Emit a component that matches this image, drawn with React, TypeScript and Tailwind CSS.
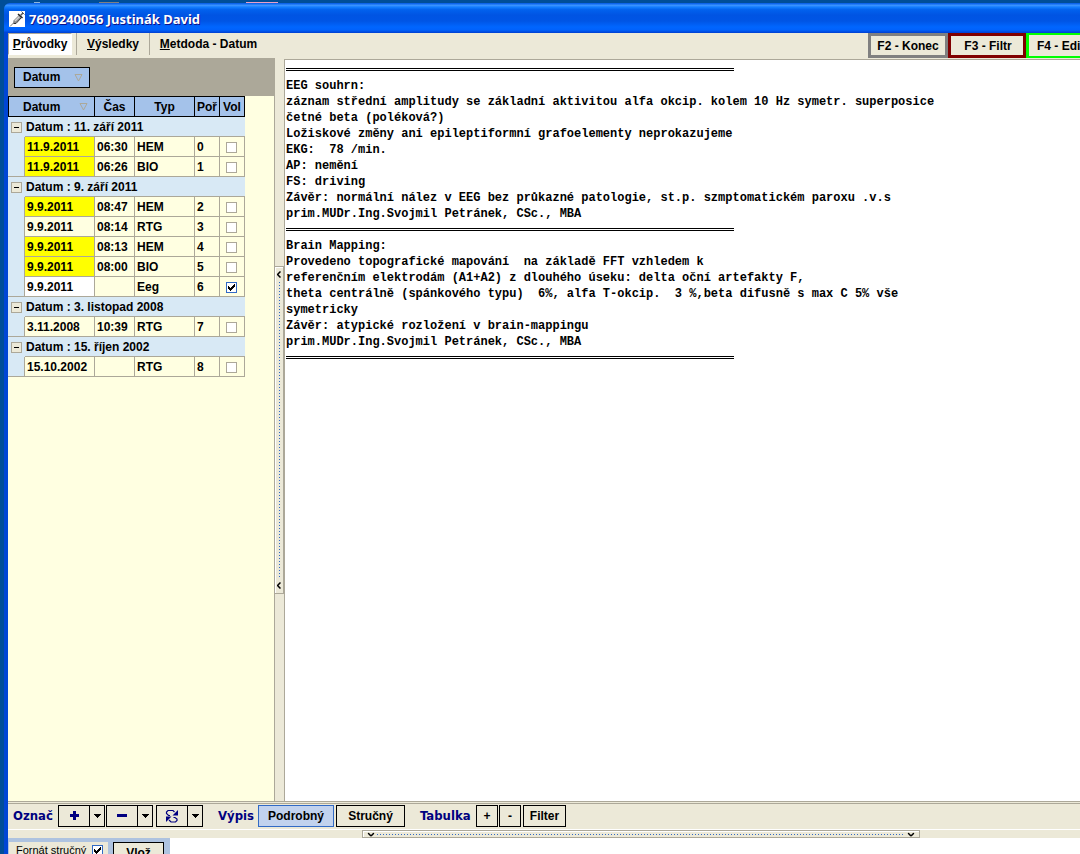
import React, { useState } from "react";
import clsx from "clsx";

interface Exam {
  id: number;
  date: string;
  time: string;
  type: string;
  tone?: "yellow" | "white";
}

interface ExamGroup {
  label: string;
  exams: Exam[];
}

const groups: ExamGroup[] = [
  {
    label: "Datum : 11. září 2011",
    exams: [
      { id: 0, date: "11.9.2011", time: "06:30", type: "HEM", tone: "yellow" },
      { id: 1, date: "11.9.2011", time: "06:26", type: "BIO", tone: "yellow" },
    ],
  },
  {
    label: "Datum : 9. září 2011",
    exams: [
      { id: 2, date: "9.9.2011", time: "08:47", type: "HEM", tone: "yellow" },
      { id: 3, date: "9.9.2011", time: "08:14", type: "RTG" },
      { id: 4, date: "9.9.2011", time: "08:13", type: "HEM", tone: "yellow" },
      { id: 5, date: "9.9.2011", time: "08:00", type: "BIO", tone: "yellow" },
      { id: 6, date: "9.9.2011", time: "", type: "Eeg", tone: "white" },
    ],
  },
  {
    label: "Datum : 3. listopad 2008",
    exams: [{ id: 7, date: "3.11.2008", time: "10:39", type: "RTG" }],
  },
  {
    label: "Datum : 15. říjen 2002",
    exams: [{ id: 8, date: "15.10.2002", time: "", type: "RTG" }],
  },
];

const reportSections = [
  `EEG souhrn:
záznam střední amplitudy se základní aktivitou alfa okcip. kolem 10 Hz symetr. superposice
četné beta (poléková?)
Ložiskové změny ani epileptiformní grafoelementy neprokazujeme
EKG:  78 /min.
AP: nemění
FS: driving
Závěr: normální nález v EEG bez průkazné patologie, st.p. szmptomatickém paroxu .v.s
prim.MUDr.Ing.Svojmil Petránek, CSc., MBA`,
  `Brain Mapping:
Provedeno topografické mapování  na základě FFT vzhledem k
referenčním elektrodám (A1+A2) z dlouhého úseku: delta oční artefakty F,
theta centrálně (spánkového typu)  6%, alfa T-okcip.  3 %,beta difusně s max C 5% vše
symetricky
Závěr: atypické rozložení v brain-mappingu
prim.MUDr.Ing.Svojmil Petránek, CSc., MBA`,
];

const buttonBase = "flex h-[22px] shrink-0 items-center justify-center border border-black bg-[#ece9d8] font-bold";
const checkboxBase = "peer col-start-1 row-start-1 size-[11px] appearance-none border border-[#aca899] bg-white checked:border-[#316ac5]";

function CheckBox(props: React.ComponentProps<"input">) {
  return (
    <span className="inline-grid place-items-center align-middle">
      <input type="checkbox" className={checkboxBase} {...props} />
      <svg
        viewBox="0 0 7 7"
        shapeRendering="crispEdges"
        className="pointer-events-none invisible col-start-1 row-start-1 size-[7px] peer-checked:visible"
      >
        <path d="M0 2h1v1h1v1h1v-1h1v-1h1v-1h1v-1h1v3h-1v1h-1v1h-1v1h-1v1h-1v-1h-1v-1h-1z" />
      </svg>
    </span>
  );
}

function SortMark() {
  return (
    <svg viewBox="0 0 9 9" className="size-[9px] fill-none stroke-[#aca899]">
      <path d="M1 1.500h7L4.500 8z" />
    </svg>
  );
}

function Caret() {
  return (
    <svg viewBox="0 0 7 4" shapeRendering="crispEdges" className="h-1 w-[7px]">
      <path d="M0 0h7v1h-1v1h-1v1h-1v1h-1v-1h-1v-1h-1v-1h-1z" />
    </svg>
  );
}

function SplitButton({ label, children }: { label: string; children: React.ReactNode }) {
  return (
    <div className="flex shrink-0">
      <button type="button" aria-label={label} className={clsx(buttonBase, "w-8 text-[#000080]")}>
        {children}
      </button>
      <button type="button" aria-label={`${label} - nabídka`} className={clsx(buttonBase, "w-[15px] border-l-0")}>
        <Caret />
      </button>
    </div>
  );
}

function TitleBar() {
  return (
    <header className="flex h-[30px] shrink-0 items-center gap-1 rounded-tl-md bg-[linear-gradient(to_bottom,#0058e6_0%,#3a93ff_8%,#127dff_14%,#0262ee_22%,#0054e3_40%,#0055e5_60%,#0066ff_80%,#0061fc_90%,#003fd0_100%)] pt-0.5 pl-[5px]">
      <svg viewBox="0 0 16 16" className="size-4 shrink-0 bg-white">
        <path d="M4.500 9.500L10 4l2.500 2.500L7 12H4z" fill="#8c8c8c" />
        <path d="M5.500 9.500L10 5l1 1-4.500 4.500z" fill="#d4d4d4" />
        <path d="M1 15.500L4.500 12" stroke="#777" fill="none" />
        <path d="M9 3l4.500 4" stroke="#222" strokeWidth="1.500" />
        <path d="M4.500 12.500H7l5.500-6" stroke="#333" fill="none" />
        <path d="M11.500 4.500L14 2" stroke="#555" strokeWidth="1.500" />
        <path d="M12.500 0.500l3 3" stroke="#555" />
      </svg>
      <h1 className="font-['Noto_Sans','Liberation_Sans',sans-serif] text-[13px] font-bold whitespace-nowrap text-white [text-shadow:1px_1px_0_#0f1089]">
        7609240056 Justinák David
      </h1>
    </header>
  );
}

function TopTabs() {
  return (
    <div className="flex h-[25px] shrink-0 items-start">
      <nav className="flex shrink-0 items-start">
        <button type="button" className="h-[22px] w-16 border border-white border-t-[#aca899] border-l-[#aca899] bg-white font-bold">
          <u>P</u>růvodky
        </button>
        <button type="button" className="ml-1 h-[22px] w-[73px] border-l border-[#aca899] font-bold">
          <u>V</u>ýsledky
        </button>
        <button type="button" className="h-[22px] w-[118px] border-l border-[#aca899] font-bold">
          <u>M</u>etdoda - Datum
        </button>
      </nav>
      {/* function keys run past the window edge */}
      <div className="ml-auto flex w-[212px] shrink-0 overflow-hidden">
        <button type="button" className="h-[25px] w-20 shrink-0 border-3 border-[#808080] font-bold">F2 - Konec</button>
        <button type="button" className="h-[25px] w-[78px] shrink-0 border-3 border-[#800000] pl-0.5 font-bold">F3 - Filtr</button>
        <button type="button" className="h-[25px] w-[84px] shrink-0 border-2 border-l-3 border-[#00ff00] pl-2 text-left font-bold">F4 - Edit</button>
      </div>
    </div>
  );
}

function ExamTable() {
  const [selected, setSelected] = useState<number[]>([6]);
  const [collapsed, setCollapsed] = useState<string[]>([]);

  const toggle = (id: number) =>
    setSelected(prev => (prev.includes(id) ? prev.filter(x => x !== id) : [...prev, id]));

  const toggleGroup = (label: string) =>
    setCollapsed(prev => (prev.includes(label) ? prev.filter(x => x !== label) : [...prev, label]));

  const th = "h-[21px] border-y border-r border-black bg-[#a4c2ea] p-0 text-center font-bold";
  const td = "h-5 border-r border-b border-[#aca899] p-0 pl-0.5 leading-4";

  return (
    <table className="w-[237px] table-fixed border-separate border-spacing-0 text-left font-bold">
      <colgroup>
        <col className="w-[17px]" />
        <col className="w-[70px]" />
        <col className="w-10" />
        <col className="w-[60px]" />
        <col className="w-[25px]" />
        <col className="w-[25px]" />
      </colgroup>
      <thead>
        <tr>
          <th colSpan={2} className={clsx(th, "border-l")}>
            <span className="flex items-center justify-between pr-1.5 pl-3.5">Datum <SortMark /></span>
          </th>
          <th className={th}>Čas</th>
          <th className={th}>Typ</th>
          <th className={th}>Poř</th>
          <th className={th}>Vol</th>
        </tr>
      </thead>
      <tbody>
        {groups.map(group => {
          const closed = collapsed.includes(group.label);
          return (
            <React.Fragment key={group.label}>
              <tr className="bg-[#d8e9f5]">
                <td className="h-5 p-0 pl-[3px]">
                  <button
                    type="button"
                    aria-label={group.label}
                    aria-expanded={!closed}
                    onClick={() => toggleGroup(group.label)}
                    className="flex size-[11px] items-center justify-center border border-[#aca899] bg-[#ece9d8]"
                  >
                    <span className="h-px w-[5px] bg-black" />
                  </button>
                </td>
                <td colSpan={5} className="h-5 border-b border-[#aca899] p-0 pl-px leading-4">{group.label}</td>
              </tr>
              {!closed && group.exams.map((exam, i) => (
                <tr key={exam.id}>
                  <td
                    className={clsx(
                      "border-r border-[#aca899] bg-[#d8e9f5] p-0",
                      i === group.exams.length - 1 && "border-b"
                    )}
                  />
                  <td
                    className={clsx(
                      td,
                      exam.tone === "yellow" && "bg-[#ffff00]",
                      exam.tone === "white" && "bg-white"
                    )}
                  >
                    {exam.date}
                  </td>
                  <td className={td}>{exam.time}</td>
                  <td className={td}>{exam.type}</td>
                  <td className={td}>{exam.id}</td>
                  <td className="h-5 border-r border-b border-[#aca899] p-0 pr-0.5 text-center leading-none">
                    <CheckBox
                      aria-label={`${exam.type} ${exam.date}`}
                      checked={selected.includes(exam.id)}
                      onChange={() => toggle(exam.id)}
                    />
                  </td>
                </tr>
              ))}
            </React.Fragment>
          );
        })}
      </tbody>
    </table>
  );
}

function Chevron({ className }: { className?: string }) {
  return (
    <svg viewBox="0 0 4 7" className={clsx("h-[7px] w-1 shrink-0 fill-none stroke-black", className)}>
      <path d="M3.500 0.500l-3 3 3 3" strokeWidth="1.500" />
    </svg>
  );
}

function VerticalSplitter() {
  return (
    <div className="flex w-[9px] shrink-0 items-center bg-[#ece9d8]">
      <button
        type="button"
        aria-label="Skrýt seznam"
        className="flex h-[328px] w-[9px] flex-col items-center border border-l-0 border-[#aca899] py-1 shadow-[inset_1px_1px_0_#fff]"
      >
        <Chevron />
        <span className="my-1 w-px flex-1 bg-[repeating-linear-gradient(to_bottom,#316ac5_0_1px,transparent_1px_3px)]" />
        <Chevron />
      </button>
    </div>
  );
}

function DoubleRule() {
  return (
    <div className="flex h-4 items-center pb-0.5">
      <hr className="w-[448px] border-t-3 border-double border-black" />
    </div>
  );
}

function Report() {
  return (
    <article className="min-w-0 flex-1 overflow-hidden border-t border-l border-[#aca899] bg-white pt-0.5 pl-px font-['Liberation_Mono',monospace] text-[12px] leading-4 font-bold">
      {reportSections.map(section => (
        <React.Fragment key={section}>
          <DoubleRule />
          <pre className="font-[inherit]">{section}</pre>
        </React.Fragment>
      ))}
      <DoubleRule />
    </article>
  );
}

function BottomBar() {
  const label = "shrink-0 font-['DejaVu_Sans_Condensed','DejaVu_Sans',sans-serif] text-[13px] font-bold text-[#000080]";

  return (
    <div className="flex h-[29px] shrink-0 items-center border-t border-b border-t-[#aca899] border-b-white pl-[5px] shadow-[inset_0_1px_0_#ece9d8,inset_0_2px_0_#aca899]">
      <span className={clsx(label, "w-[45px]")}>Označ</span>
      <div className="flex gap-px">
        <SplitButton label="Označit">
          <svg viewBox="0 0 9 9" shapeRendering="crispEdges" className="size-[9px] fill-current">
            <path d="M3 0h3v3h3v3h-3v3h-3v-3h-3v-3h3z" />
          </svg>
        </SplitButton>
        <SplitButton label="Odznačit">
          <span className="h-[3px] w-2.5 bg-[#000080]" />
        </SplitButton>
      </div>
      <div className="ml-[3px]">
        <SplitButton label="Obrátit výběr">
          <svg viewBox="0 0 14 14" className="size-3.5 fill-none stroke-current">
            <path d="M9.500 3L8 1.500H3L1.500 3v1.500L3.500 6.500H5" strokeWidth="1.200" />
            <path d="M13 1v5.500H7.500z" fill="currentColor" stroke="none" />
            <path d="M8.500 8.500H10l2 1.500v1.500L10.500 13H6L4 11" strokeWidth="1.200" />
            <path d="M1 13V7.500h5.500z" fill="currentColor" stroke="none" />
          </svg>
        </SplitButton>
      </div>
      <span className={clsx(label, "ml-[15px] w-10")}>Výpis</span>
      <button type="button" className="h-[22px] w-[76px] shrink-0 border border-[#316ac5] bg-[#c1d2ee] font-bold">Podrobný</button>
      <button type="button" className={clsx(buttonBase, "ml-0.5 w-[69px]")}>Stručný</button>
      <span className={clsx(label, "ml-[15px] w-14")}>Tabulka</span>
      <button type="button" className={clsx(buttonBase, "w-[22px]")}>+</button>
      <button type="button" className={clsx(buttonBase, "ml-px w-[22px]")}>-</button>
      <button type="button" className={clsx(buttonBase, "ml-0.5 w-[43px]")}>Filter</button>
    </div>
  );
}

export default function App() {
  return (
    <div className="flex h-screen flex-col overflow-hidden bg-[#004e98] pl-1 font-['Liberation_Sans',Arial,sans-serif] text-[12px] leading-4 text-black">
      {/* desktop items peeking out above the window */}
      <div className="flex h-[3px] shrink-0 items-end pl-[30px]">
        <span className="h-px w-1.5 bg-[#8fb4d8]" />
        <span className="ml-[59px] h-px w-5 bg-[#808080]" />
        <span className="ml-[127px] h-px w-8 bg-[#e9a0c4]" />
      </div>
      <TitleBar />
      <div className="flex min-h-0 flex-1 flex-col border-l-4 border-[#0046d5] bg-[#ece9d8]">
        <TopTabs />

        <main className="flex min-h-0 flex-1">
          <section className="flex w-[267px] shrink-0 flex-col border-r border-[#aca899] bg-[#ffffe1]">
            <div className="flex h-[38px] shrink-0 items-center bg-[#aca899] pl-1.5">
              <button type="button" className="flex h-[21px] w-[76px] items-center justify-between border border-black bg-[#a4c2ea] pr-1.5 pl-2 font-bold">
                Datum <SortMark />
              </button>
            </div>
            <ExamTable />
          </section>
          <VerticalSplitter />
          <div className="flex min-w-0 flex-1 pt-px">
            <Report />
          </div>
        </main>

        <BottomBar />

        <div className="flex h-2 shrink-0 pl-[354px]">
          <button
            type="button"
            aria-label="Skrýt panel"
            className="flex h-2 w-[558px] items-center border border-[#aca899] px-1.5 shadow-[inset_1px_1px_0_#fff]"
          >
            <Chevron className="-rotate-90" />
            <span className="mx-1 h-px flex-1 bg-[repeating-linear-gradient(to_right,#316ac5_0_1px,transparent_1px_3px)]" />
            <Chevron className="-rotate-90" />
          </button>
        </div>

        <footer className="flex h-4 shrink-0 overflow-hidden bg-white">
          <div className="flex h-10 w-[162px] shrink-0 items-start gap-[5px] bg-[#aec3e0] pt-1 pl-px">
            <label className="flex h-6 w-[99px] shrink-0 items-start gap-1.5 bg-[#ece9d8] pl-[7px] text-[11px] whitespace-nowrap">
              Fornát stručný
              <span className="pt-0.5 leading-none"><CheckBox defaultChecked /></span>
            </label>
            <button type="button" className={clsx(buttonBase, "w-[51px]")}>Vlož</button>
          </div>
        </footer>
      </div>
    </div>
  );
}
